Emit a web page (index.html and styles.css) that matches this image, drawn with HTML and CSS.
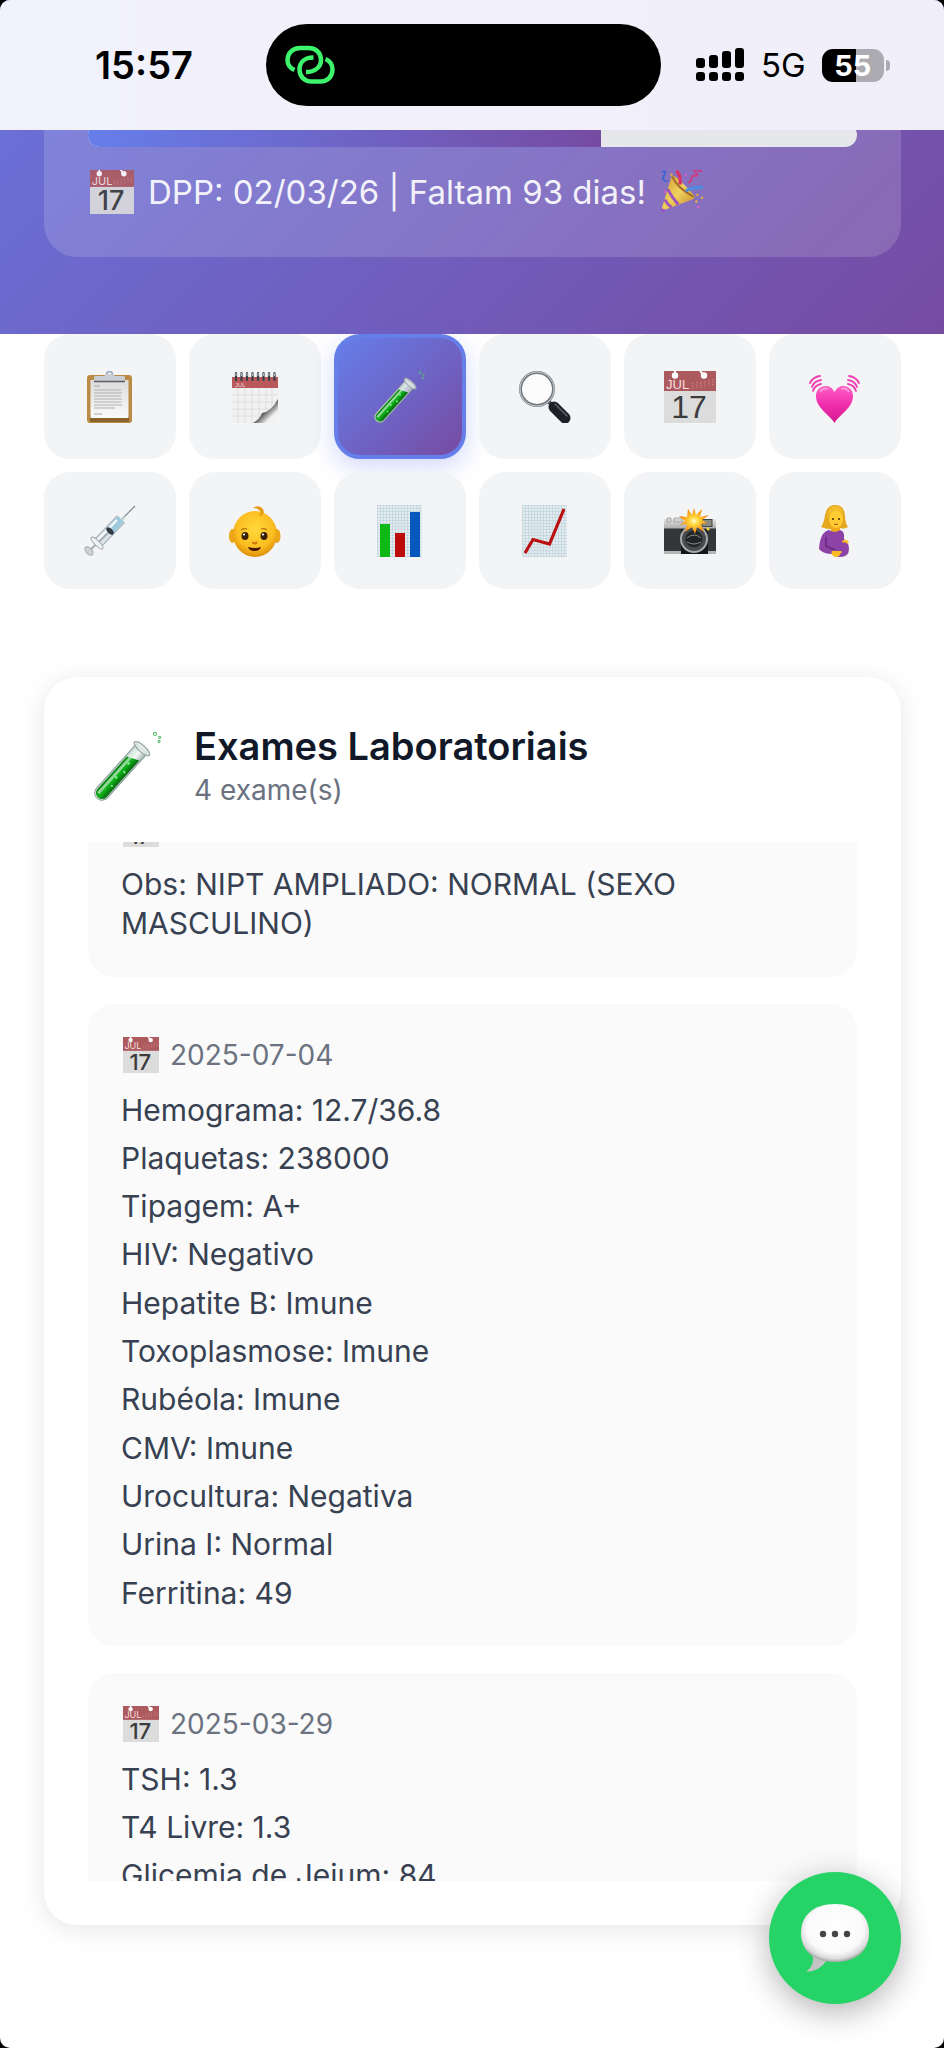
FILE: index.html
```html
<!DOCTYPE html>
<html lang="pt-BR">
<head>
<meta charset="utf-8">
<meta name="viewport" content="width=device-width, initial-scale=1">
<title>Exames Laboratoriais</title>
<link rel="stylesheet" href="styles.css">
</head>
<body>
<svg class="defs" aria-hidden="true">
  <defs>
    <linearGradient id="g-paper" x1="0" y1="0" x2="0" y2="1"><stop offset="0" stop-color="#dcdcdc"/><stop offset="1" stop-color="#fafafa"/></linearGradient>
    <linearGradient id="g-liquid" x1="0" y1="0" x2="0" y2="1"><stop offset="0" stop-color="#078011"/><stop offset=".5" stop-color="#0fb51a"/><stop offset="1" stop-color="#05650d"/></linearGradient>
    <linearGradient id="g-glass" x1="0" y1="0" x2="0" y2="1"><stop offset="0" stop-color="#c9d6d2"/><stop offset=".5" stop-color="#f4f8f6" stop-opacity=".7"/><stop offset="1" stop-color="#9fb0ab"/></linearGradient>
    <linearGradient id="g-heart" x1="0" y1="0" x2="0" y2="1"><stop offset="0" stop-color="#ff5fc4"/><stop offset=".5" stop-color="#f02fae"/><stop offset="1" stop-color="#d41a8e"/></linearGradient>
    <linearGradient id="g-cone" x1="0" y1="0" x2="1" y2="1"><stop offset="0" stop-color="#d99a1c"/><stop offset=".5" stop-color="#fbdc55"/><stop offset="1" stop-color="#c98414"/></linearGradient>
    <linearGradient id="g-metal" x1="0" y1="0" x2="0" y2="1"><stop offset="0" stop-color="#e4e4e4"/><stop offset="1" stop-color="#a9a9a9"/></linearGradient>
    <linearGradient id="g-curl" x1="0" y1="0" x2="1" y2="1"><stop offset=".3" stop-color="#bdbdbd"/><stop offset=".5" stop-color="#555"/><stop offset=".75" stop-color="#f2f2f2"/></linearGradient>
    <radialGradient id="g-face" cx=".5" cy=".4" r=".6"><stop offset="0" stop-color="#ffd93b"/><stop offset=".7" stop-color="#fbbd20"/><stop offset="1" stop-color="#dd8d08"/></radialGradient>
    <radialGradient id="g-bubble" cx=".5" cy=".42" r=".58"><stop offset="0" stop-color="#fff"/><stop offset=".72" stop-color="#fafafa"/><stop offset=".9" stop-color="#dcdcdc"/><stop offset="1" stop-color="#a8a8a8"/></radialGradient>
    <radialGradient id="g-flash"><stop offset="0" stop-color="#fffbd0"/><stop offset=".3" stop-color="#ffd83c"/><stop offset=".7" stop-color="#ffa31c"/><stop offset="1" stop-color="#f07e0c"/></radialGradient>
    <pattern id="p-grid" width="3" height="3" patternUnits="userSpaceOnUse"><rect width="3" height="3" fill="#e4ecf0"/><path d="M0 .5H3M.5 0V3" stroke="#c3d5de" stroke-width=".8"/></pattern>
    <symbol id="calendar" viewBox="0 0 52 52">
      <rect width="52" height="52" fill="#dcdcdc"/><rect width="52" height="20" fill="#ad5a5e"/>
      <circle cx="11" cy="4.500" r="3.200" fill="#fff"/><path d="M11 0v4" stroke="#fff" stroke-width="2"/>
      <circle cx="40" cy="4.500" r="3.200" fill="#fff"/><path d="M36 0l4 4" stroke="#fff" stroke-width="2"/>
      <path d="M29 12v6M33 11v6M37 11v6M41 10v6M45 9v6M49 8v7" stroke="#c98587" stroke-width="1.200" stroke-dasharray="1.500 1"/>
      <text x="2" y="18" font-size="13" fill="#f5dfdf">JUL</text>
      <text x="25" y="47" font-size="32" fill="#3c3c3c" text-anchor="middle" font-weight="500">17</text>
    </symbol>
    <symbol id="tube" viewBox="0 0 52 52">
      <g transform="rotate(-48 6 46)">
        <path d="M6 40.500H51V51.500H6a5.500 5.500 0 0 1 0-11Z" fill="url(#g-glass)" stroke="#8ba39b" stroke-width=".8"/>
        <path d="M6 41.500H39L43 50.500H6a4.500 4.500 0 0 1 0-9Z" fill="url(#g-liquid)"/>
        <path d="M4 44H48" stroke="#d6f5dc" stroke-width="2.200" opacity=".65"/>
        <ellipse cx="51" cy="46" rx="2.500" ry="7.500" fill="#e6eceb" fill-opacity=".8" stroke="#97a8a4" stroke-width="1"/>
        <g fill="#7bea84"><circle cx="15" cy="48" r=".8"/><circle cx="22" cy="46" r="1"/><circle cx="29" cy="48" r="1"/><circle cx="36" cy="46" r="1"/></g>
      </g>
      <g fill="none" stroke="#58bd70" stroke-width=".8"><circle cx="46" cy="1.500" r="1.200"/><circle cx="49.500" cy="4" r=".8"/><circle cx="49" cy="7" r=".8"/></g>
    </symbol>
    <symbol id="clipboard" viewBox="0 0 52 52">
      <rect x="3" y="4" width="45" height="48" rx="3" fill="#b98b45"/><rect x="6" y="44" width="39" height="7" fill="#8b642b"/>
      <path d="M6.500 9h38v38h-38z" fill="url(#g-paper)"/>
      <path d="M10 19h27M10 22h28M10 25h27M10 28h28M10 31h27M10 34h28M10 37h21" stroke="#b0b0b0" stroke-width="1"/><path d="M10 15h6M10 43h8" stroke="#a9a9a9" stroke-width="1"/>
      <circle cx="25.500" cy="3.500" r="3" fill="none" stroke="#99a6ba" stroke-width="1.600"/><path d="M10 10V6q0-1 2-1h8q2-2 5.500-2T31 5h8q2 0 2 1v4z" fill="#c9cdd4"/><path d="M10 10.500h31" stroke="#5b5e63" stroke-width="1.500"/>
    </symbol>
    <symbol id="spiral" viewBox="0 0 52 52">
      <rect x="3" y="17" width="46" height="35" fill="#f1f1f1"/><path d="M3 24h46M3 31h46M3 38h46M3 45h40M9 17v35M16 17v35M23 17v35M30 17v35M37 17v30M43 17v20" stroke="#d8dadd" stroke-width=".8"/>
      <rect x="3" y="6" width="46" height="11" fill="#b8585b"/><text x="6" y="16" font-size="6" fill="#f3d6d6">JUL</text>
      <path d="M24 52q7-4 9-10 9-1 16-14v24z" fill="url(#g-curl)"/>
      <g stroke="#393f45" stroke-width="2.200" stroke-linecap="round"><path d="M7 2v7M12.500 2v7M18 2v7M23.500 2v7M29 2v7M34.500 2v7M40 2v7M45.500 2v7"/></g><path d="M7 2v3M12.500 2v3M18 2v3M23.500 2v3M29 2v3M34.500 2v3M40 2v3M45.500 2v3" stroke="#a5b6c3" stroke-width="1.200"/>
    </symbol>
    <symbol id="lens" viewBox="0 0 52 52">
      <path d="M29 30l6 6" stroke="#555b62" stroke-width="4"/><path d="M35 36l11 11" stroke="#1d2126" stroke-width="11" stroke-linecap="round"/><path d="M36 33l12 12" stroke="#5b6067" stroke-width="1.500" stroke-linecap="round"/>
      <circle cx="18" cy="18" r="16.500" fill="#fbfbfb" stroke="#72777c" stroke-width="3"/><circle cx="18" cy="18" r="17" fill="none" stroke="#cfd8df" stroke-width="1"/>
    </symbol>
    <symbol id="heart" viewBox="0 0 52 52">
      <path d="M25.500 52C20 43 7 37 7 25c0-11 14-14 18.500-4C30 11 44 14 44 25c0 12-13 18-18.500 27Z" fill="url(#g-heart)"/>
      <g fill="none" stroke="#f03cb0" stroke-width="1.800" stroke-linecap="round"><path d="M4 20Q6 14 12 13M3 16Q5 10 12 9M1 12Q4 6 11 5M47 20Q45 14 39 13M48 16Q46 10 39 9M50 12Q47 6 40 5"/></g><path d="M11 21q3-5 8-3M32 18q5-2 8 3" stroke="#ffb0e2" stroke-width="2" fill="none" opacity=".7"/>
    </symbol>
    <symbol id="syringe" viewBox="0 0 52 52">
      <path d="M38 14L51 1" stroke="#7f8a91" stroke-width="1.200"/><path d="M37 17l3-6 2 2-4 5z" fill="#d7dde0"/>
      <path d="M13 39L37 14" stroke="#9fb0b8" stroke-width="11"/><path d="M13 39L37 14" stroke="#dde5e9" stroke-width="9"/><path d="M26 26L37 14" stroke="#9fcadd" stroke-width="8"/><path d="M14 35L33 15" stroke="#f8fbfc" stroke-width="2"/>
      <ellipse cx="26" cy="26" rx="2.500" ry="4.500" fill="#303840" transform="rotate(-45 26 26)"/><path d="M5 46L24 28" stroke="#a5afb5" stroke-width="2"/>
      <ellipse cx="13" cy="38" rx="8" ry="2.500" transform="rotate(45 13 38)" fill="#eef1f2" stroke="#98a5ad"/><ellipse cx="5" cy="46" rx="5" ry="3" transform="rotate(45 5 46)" fill="#cdd2d5" stroke="#a2aaaf"/>
    </symbol>
    <symbol id="baby" viewBox="0 0 52 52">
      <ellipse cx="3.500" cy="31" rx="3.500" ry="7" fill="#eda51a"/><ellipse cx="48" cy="31" rx="3.500" ry="7" fill="#eda51a"/><ellipse cx="26" cy="29" rx="22" ry="23" fill="url(#g-face)"/>
      <path d="M24 3Q30-1 34 4q3 7-5 7 4-2 2-5-2-3-7-3Z" fill="#e59b12"/><ellipse cx="16" cy="31" rx="3.500" ry="4" fill="#3a2208"/><ellipse cx="35" cy="31" rx="3.500" ry="4" fill="#3a2208"/><circle cx="15" cy="29.500" r="1.100" fill="#fff"/><circle cx="34" cy="29.500" r="1.100" fill="#fff"/>
      <path d="M12 25q3-2 6-1M32 24q3-1 6 1" stroke="#b87308" stroke-width="1.200" fill="none"/><path d="M23.500 37q2 3 4.500 0" stroke="#cc7507" stroke-width="2" fill="none"/><path d="M19 42q7 2 13 0-1 4-6.500 4T19 42Z" fill="#4a1509"/>
    </symbol>
    <symbol id="bars" viewBox="0 0 52 52"><rect x="3" width="45" height="52" fill="url(#p-grid)"/><rect x="6" y="19" width="10" height="33" fill="#0cb916"/><rect x="21" y="28" width="10" height="24" fill="#bd0b0b"/><rect x="36" y="7" width="10" height="45" fill="#0759bd"/></symbol>
    <symbol id="trend" viewBox="0 0 52 52"><rect x="3" width="45" height="52" fill="url(#p-grid)"/><path d="M6 48l8-13.500L30.500 39 45 4" fill="none" stroke="#bb1011" stroke-width="3.200"/></symbol>
    <symbol id="camera" viewBox="0 0 52 52">
      <path d="M0 14h52v10H0z" fill="url(#g-metal)"/><path d="M3 13h4v4H3zM10 13h8v4h-8z" fill="#d5d5d5" stroke="#888" stroke-width=".6"/><path d="M0 23.500h52V47H0z" fill="#353637"/><path d="M0 46h52v3H0z" fill="#b4b5b5"/><path d="M17 24h27v25H17z" fill="#151617"/><rect x="38" y="14.500" width="10" height="7" fill="#8a8b80" stroke="#444"/>
      <circle cx="30" cy="34" r="13" fill="#494b4d" stroke="#a7a9aa" stroke-width="2"/><circle cx="30" cy="34" r="8.500" fill="#222527"/><path d="M23 33q7-6 14 0M23 37q7 4 14 0" stroke="#858a8d" fill="none"/><circle cx="44" cy="24" r="1.500" fill="#f5de35"/>
      <path d="M24 4l4 6 2-7 2 7 6-6-2 8 9-2-7 5 5 3-6 1 3 8-7-5-2 7-3-7-7 5 2-8-7 1 5-4-6-5 8 1z" fill="url(#g-flash)"/>
    </symbol>
    <symbol id="pregnant" viewBox="0 0 52 52">
      <path d="M12 22Q15 18 16 10 18 0 26 0q9 0 10 10 0 8 3 12-5 3-10 0-8 4-17 0Z" fill="#e5a71d"/><path d="M22 20h9v8h-9z" fill="#efa91a"/><ellipse cx="27" cy="14" rx="7" ry="9" fill="#ffcc32"/><path d="M18 14Q20 6 27 5q7 1 8 8-1-12-9-12T18 14Z" fill="#f2bd2d"/>
      <circle cx="24" cy="14" r="1" fill="#492808"/><circle cx="30" cy="14" r="1" fill="#492808"/><path d="M25 19q2 1 4 0" stroke="#a44a18" fill="none"/>
      <path d="M20 25q6 4 11 0 5 1 4 9 5 4 5 10 0 8-9 8-5 0-8-3-9 0-13-5 1-17 10-19Z" fill="#8d42a5"/><path d="M17 32v9l9 4" fill="none" stroke="#65297e" stroke-width="1.500"/><path d="M23 50q-2-5 3-4h6q2 1-1 3 0 3-5 3M33 36q4-3 7 1-2 3-4 0l-2 1Z" fill="#fbbb27"/>
    </symbol>
    <symbol id="party" viewBox="0 0 46 46">
      <path d="M1 43L12 7q2-3 10 5t14 15q1 3-3 4Z" fill="url(#g-cone)"/><path d="M13 7q4 11 22 21" fill="none" stroke="#a56a18" stroke-width="2"/><path d="M8 20q4 8 11 16M5 31q3 5 7 8M1 41l4 2" stroke="#a04fc0" stroke-width="3" fill="none"/>
      <path d="M2 2q5-2 3 2t-2 5q2 4 5 2" stroke="#3b65d3" stroke-width="2" fill="none"/><path d="M17 1q5 4 4 14" stroke="#e12d5e" stroke-width="3.500" fill="none"/><path d="M29 13q4 0 4-4t4-3 0-4 7 0" stroke="#d83578" stroke-width="2" fill="none"/><path d="M27 22q6-4 18-4" stroke="#4591e5" stroke-width="3" fill="none"/>
      <g fill="#f1b92a"><circle cx="12" cy="5" r="1.300"/><circle cx="39" cy="26" r="1.300"/><circle cx="44" cy="29" r="1.300"/><circle cx="38" cy="33" r="1.300"/></g><g fill="#e460c3"><circle cx="27" cy="5" r="1.200"/><circle cx="40" cy="39" r="1.300"/><circle cx="5" cy="23" r="1.500"/></g>
    </symbol>
    <symbol id="bubble" viewBox="0 0 68 68">
      <path d="M11 50q4 10-6 18 14-1 21-12z" fill="#c4c4c4"/><path d="M34 0C56 0 68 12 68 29S56 58 34 58 0 46 0 29 12 0 34 0Z" fill="url(#g-bubble)"/><g fill="#464646"><circle cx="22" cy="30" r="3.200"/><circle cx="34" cy="30" r="3.200"/><circle cx="46" cy="30" r="3.200"/></g>
    </symbol>
  </defs>
</svg>

<div class="screen">
  <div class="status">
    <time class="clock">15:57</time>
    <div class="island">
      <svg class="link" viewBox="0 0 50 40" fill="none" stroke="#3df46c" stroke-width="4.500" stroke-linecap="butt"><path d="M9.500 25C5 23 2.500 19 2.500 15 2.500 8 8 3 15 3h9c7 0 12 5 12 12s-6 12-15 12"/><path d="M40.500 14c4.500 2 7 6 7 10.500 0 7-5 12-12 12h-9c-7 0-12-5-12-12s5-12 14-12"/></svg>
    </div>
    <div class="indicators">
      <svg class="signal" viewBox="0 0 48 34"><g><rect x="0" y="10" width="9" height="10" rx="3"/><rect x="13" y="7" width="9" height="13" rx="3"/><rect x="26" y="3" width="9" height="17" rx="3"/><rect x="39" y="0" width="9" height="20" rx="3"/><rect x="0" y="24" width="9" height="9" rx="3"/><rect x="13" y="24" width="9" height="9" rx="3"/><rect x="26" y="24" width="9" height="9" rx="3"/><rect x="39" y="24" width="9" height="9" rx="3"/></g></svg>
      <span class="network">5G</span>
      <span class="battery"><span class="level">55</span></span>
    </div>
  </div>

  <header class="hero">
    <div class="summary">
      <div class="progress" role="progressbar" aria-valuenow="67" aria-valuemin="0" aria-valuemax="100"><div class="fill" style="width:66.700%"></div></div>
      <p class="due"><svg class="emoji"><use href="#calendar"/></svg><span>DPP: 02/03/26 | Faltam 93 dias!</span><svg class="emoji"><use href="#party"/></svg></p>
    </div>
  </header>

  <nav class="tabs">
    <button class="tab" aria-label="Resumo"><svg><use href="#clipboard"/></svg></button>
    <button class="tab" aria-label="Agenda"><svg><use href="#spiral"/></svg></button>
    <button class="tab active" aria-label="Exames"><svg><use href="#tube"/></svg></button>
    <button class="tab" aria-label="Ultrassom"><svg><use href="#lens"/></svg></button>
    <button class="tab" aria-label="Consultas"><svg><use href="#calendar"/></svg></button>
    <button class="tab" aria-label="Batimentos"><svg><use href="#heart"/></svg></button>
    <button class="tab" aria-label="Vacinas"><svg><use href="#syringe"/></svg></button>
    <button class="tab" aria-label="Bebê"><svg><use href="#baby"/></svg></button>
    <button class="tab" aria-label="Gráficos"><svg><use href="#bars"/></svg></button>
    <button class="tab" aria-label="Evolução"><svg><use href="#trend"/></svg></button>
    <button class="tab" aria-label="Fotos"><svg><use href="#camera"/></svg></button>
    <button class="tab" aria-label="Gestante"><svg><use href="#pregnant"/></svg></button>
  </nav>

  <main class="card">
    <div class="card-head">
      <svg class="head-icon"><use href="#tube"/></svg>
      <div><h1>Exames Laboratoriais</h1><p class="count">4 exame(s)</p></div>
    </div>
    <div class="exams">
      <section class="exam scrolled">
        <p class="date"><svg class="emoji"><use href="#calendar"/></svg></p>
        <ul><li>Obs: NIPT AMPLIADO: NORMAL (SEXO MASCULINO)</li></ul>
      </section>
      <section class="exam">
        <p class="date"><svg class="emoji"><use href="#calendar"/></svg><time>2025-07-04</time></p>
        <ul>
          <li>Hemograma: 12.7/36.8</li><li>Plaquetas: 238000</li><li>Tipagem: A+</li><li>HIV: Negativo</li><li>Hepatite B: Imune</li><li>Toxoplasmose: Imune</li><li>Rubéola: Imune</li><li>CMV: Imune</li><li>Urocultura: Negativa</li><li>Urina I: Normal</li><li>Ferritina: 49</li>
        </ul>
      </section>
      <section class="exam">
        <p class="date"><svg class="emoji"><use href="#calendar"/></svg><time>2025-03-29</time></p>
        <ul><li>TSH: 1.3</li><li>T4 Livre: 1.3</li><li>Glicemia de Jejum: 84</li></ul>
      </section>
    </div>
  </main>

  <button class="chat" aria-label="Conversar"><svg><use href="#bubble"/></svg></button>
</div>
</body>
</html>
```
FILE: styles.css
```css
* { box-sizing: border-box; margin: 0; padding: 0; }
body { background: #000; font-family: Inter, "Liberation Sans", sans-serif; color: #374151; }
.defs { position: absolute; width: 0; height: 0; }
button { border: 0; cursor: pointer; }
ul { list-style: none; }

.screen {
  position: relative;
  display: flex;
  flex-direction: column;
  height: 100vh;
  overflow: hidden;
  border-radius: 10px;
  background: #fff;
}

.status {
  position: absolute;
  inset: 0 0 auto;
  z-index: 2;
  display: grid;
  grid-template-columns: 1fr 395px 1fr;
  align-items: center;
  height: 130px;
  padding-right: 17px;
  background: linear-gradient(90deg, #f2f2fc, #f0eff9);
  color: #000;
}
.clock { padding-left: 22px; text-align: center; font-size: 38px; font-weight: 600; }
.island { display: flex; align-items: center; height: 82px; padding-left: 19px; border-radius: 41px; background: #000; }
.link { width: 50px; height: 40px; }
.indicators { display: flex; align-items: center; padding-left: 35px; }
.signal { flex: none; width: 48px; height: 34px; margin-right: 17px; }
.network { font-size: 33px; line-height: 34px; }
.battery {
  position: relative;
  flex: none;
  width: 62px;
  height: 33px;
  margin-left: 16px;
  border-radius: 11px;
  background: linear-gradient(90deg, #000 55%, #acabb1 55%);
  color: #fff;
  text-align: center;
}
.battery::after { content: ""; position: absolute; right: -6px; top: 11px; width: 4px; height: 11px; border-radius: 0 5px 5px 0; background: #acabb1; }
.level { font-size: 29px; line-height: 33px; font-weight: 700; }

.hero { flex: none; padding: 0 43px 77px 44px; background: linear-gradient(135deg, #6973dc, #764ba2); }
.summary { padding: 123px 44px 43px; border-radius: 0 0 33px 33px; background: rgba(255, 255, 255, .15); }
.progress { height: 24px; overflow: hidden; border-radius: 12px; background: #e5e7eb; }
.fill { height: 100%; background: linear-gradient(90deg, #667eea, #764ba2); }
.due { display: flex; align-items: center; gap: 14px; padding: 23px 0 0 2px; color: #fff; font-size: 33px; line-height: 44px; opacity: .9; }
.due .emoji { width: 44px; height: 44px; }

.tabs { flex: none; display: grid; grid-template-columns: repeat(6, 1fr); grid-template-rows: 125px 117px; gap: 13px; padding: 0 43px 0 44px; }
.tab { display: flex; align-items: center; justify-content: center; border-radius: 26px; background: #f3f4f6; }
.tab svg { flex: none; width: 52px; height: 52px; overflow: visible; }
.tab.active { border: 4px solid #667eea; background: linear-gradient(135deg, #667eea, #764ba2); box-shadow: 0 8px 24px rgba(102, 126, 234, .3); }

.card {
  flex: 1;
  min-height: 0;
  display: flex;
  flex-direction: column;
  margin: 88px 43px 123px 44px;
  padding: 44px;
  border-radius: 33px;
  background: #fff;
  box-shadow: 0 4px 26px rgba(0, 0, 0, .1);
}
.card-head { display: flex; align-items: center; gap: 31px; height: 88px; margin-bottom: 33px; padding: 2px 0 0 6px; }
.head-icon { width: 69px; height: 69px; overflow: visible; }
h1 { color: #111827; font-size: 38px; line-height: 48px; font-weight: 600; }
.count { color: #6b7280; font-size: 28px; line-height: 40px; }

.exams { flex: 1; min-height: 0; display: flex; flex-direction: column; gap: 27px; overflow: hidden; }
.exam { flex: none; padding: 33px; border-radius: 26px; background: #fafafa; }
.exam.scrolled { margin-top: -64px; }
.exam ul { display: flex; flex-direction: column; gap: 9px; }
.exam li { font-size: 30px; line-height: 1.31; }
.date { display: flex; align-items: center; gap: 11px; height: 36px; margin-bottom: 18px; color: #6b7280; font-size: 28px; }
.date .emoji { width: 36px; height: 36px; margin-left: 2px; }

.chat {
  position: absolute;
  right: 43px;
  bottom: 44px;
  display: flex;
  align-items: center;
  justify-content: center;
  width: 132px;
  height: 132px;
  border-radius: 50%;
  background: #25d366;
  box-shadow: 0 8px 32px rgba(0, 0, 0, .3);
}
.chat svg { width: 68px; height: 68px; overflow: visible; }
```
